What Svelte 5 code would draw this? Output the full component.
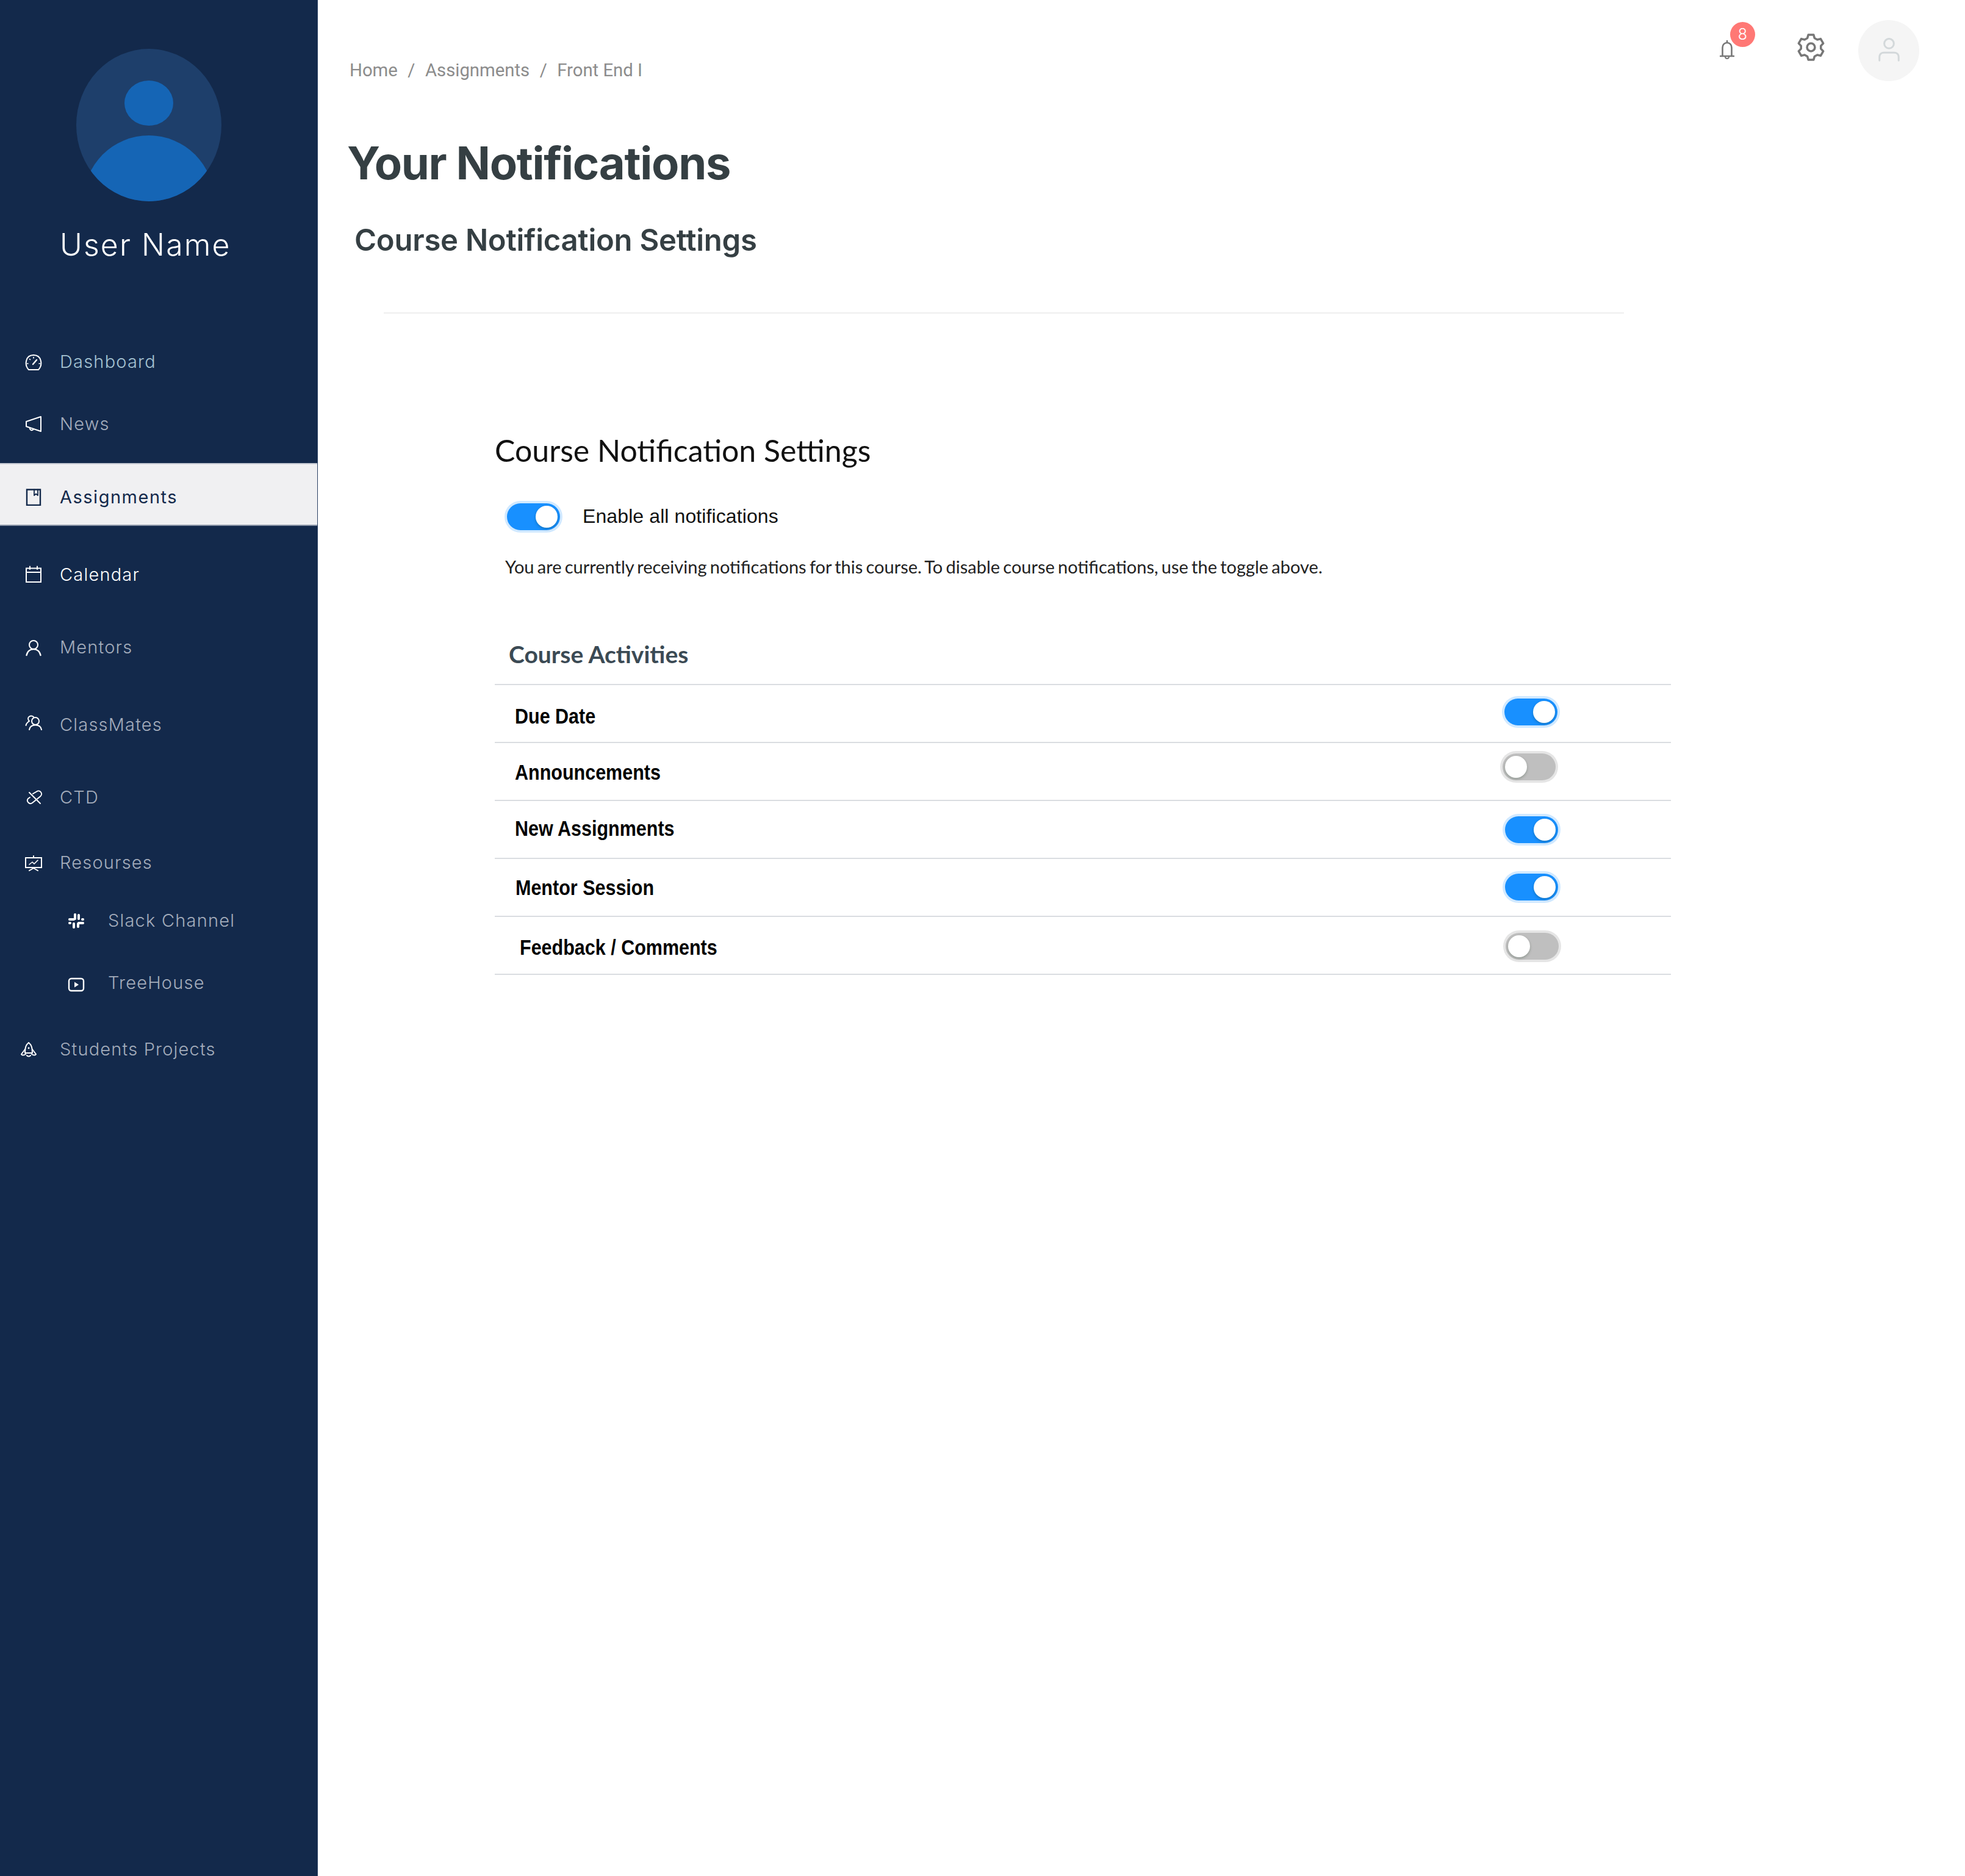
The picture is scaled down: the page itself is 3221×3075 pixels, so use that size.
<script>
const navItems = [
  { id: 'dashboard', label: 'Dashboard', gap: 0, tone: 'teal', iconY: 2 },
  { id: 'news', label: 'News', gap: 42, iconY: 1 },
  { id: 'assignments', label: 'Assignments', gap: 35, active: true, iconY: 0 },
  { id: 'calendar', label: 'Calendar', gap: 49, tone: 'bright', iconY: 0 },
  { id: 'mentors', label: 'Mentors', gap: 59, iconY: 2 },
  { id: 'classmates', label: 'ClassMates', gap: 67, iconY: -2 },
  { id: 'ctd', label: 'CTD', gap: 59, iconY: 2 },
  { id: 'resources', label: 'Resourses', gap: 47, iconY: 2 },
  { id: 'slack', label: 'Slack Channel', gap: 35, sub: true, iconY: 2 },
  { id: 'treehouse', label: 'TreeHouse', gap: 42, sub: true, iconY: 4 },
  { id: 'rocket', label: 'Students Projects', gap: 49, outdent: true, iconY: 2 }
];

// offsets differ slightly per row in the design
const activities = [
  { label: 'Due Date', on: true, x: 33, labelTop: 30, toggleX: 1655, toggleTop: 22 },
  { label: 'Announcements', on: false, x: 33, labelTop: 27, toggleX: 1652, toggleTop: 17 },
  { label: 'New Assignments', on: true, x: 33, labelTop: 24, toggleX: 1656, toggleTop: 25 },
  { label: 'Mentor Session', on: true, x: 34, labelTop: 26, toggleX: 1656, toggleTop: 24 },
  { label: 'Feedback / Comments', on: false, x: 41, labelTop: 29, toggleX: 1657, toggleTop: 26 }
];
</script>

<div class="layout">
  <aside class="sidebar">
    <svg class="avatar" viewBox="0 0 238 250">
      <defs>
        <clipPath id="avatar-clip"><ellipse cx="119" cy="125" rx="119" ry="125" /></clipPath>
      </defs>
      <ellipse cx="119" cy="125" rx="119" ry="125" fill="#1e3f6b" />
      <ellipse cx="119" cy="89" rx="40" ry="37" fill="#1565b5" />
      <g clip-path="url(#avatar-clip)">
        <ellipse cx="119" cy="249" rx="107" ry="107" fill="#1565b5" />
      </g>
    </svg>
    <div class="username">User Name</div>

    <nav class="nav">
      {#each navItems as item}
        <a
          class="nav-item"
          class:active={item.active}
          class:sub={item.sub}
          class:outdent={item.outdent}
          class:teal={item.tone === 'teal'}
          class:bright={item.tone === 'bright'}
          style="margin-top: {item.gap}px"
          href="#{item.id}"
        >
          <svg class="nav-icon" style="margin-top: {item.iconY * 2}px" viewBox="0 0 28 28" fill="none" stroke="currentColor" stroke-width="2" stroke-linecap="round" stroke-linejoin="round">
            {#if item.id === 'dashboard'}
              <path d="M6 26 C-1 19 0 2 14 2 C28 2 29 19 22 26 Z" />
              <path d="M13 17 L19 10" stroke-width="2.4" />
              <path d="M3.500 16 h1.500 M23 16 h1.500 M7.500 8.500 l1 1 M14 5.500 v1.500" stroke-width="1.600" />
            {:else if item.id === 'news'}
              <path d="M26 2 V26 L2 18 V10 Z" />
              <path d="M8 20 a3 3 0 0 0 6 2" />
            {:else if item.id === 'assignments'}
              <path d="M3 1.500 H25 V27 H3 Z" stroke-linecap="butt" stroke-linejoin="miter" stroke-width="2.400" />
              <path d="M15 1.500 V11 L18 8.500 L21 11 V1.500" stroke-width="1.800" />
            {:else if item.id === 'calendar'}
              <path d="M2 4.500 H26 V27 H2 Z M2 11 H26" stroke-linejoin="miter" />
              <path d="M8 1.500 V6 M20 1.500 V6" />
            {:else if item.id === 'mentors'}
              <circle cx="14" cy="9" r="7" />
              <path d="M2.500 26 C4 19 9 16 14 16 C19 16 24 19 25.500 26" stroke-width="2.400" />
            {:else if item.id === 'classmates'}
              <circle cx="17" cy="11" r="6" />
              <path d="M7 25 C8 19 12 17.500 17 17.500 C22 17.500 26 19 27 25" />
              <path d="M14 4 A6 6 0 0 0 7 3.500 C4 5.500 5 9 7 11 C4 13 2 15 1.500 18" />
            {:else if item.id === 'ctd'}
              <path d="M13 7 L19 3.500 a5 5 0 0 1 6 8 L12 22 a5 5 0 0 1 -7 -7 L8 13" />
              <path d="M7 5 L25 23" />
            {:else if item.id === 'resources'}
              <path d="M1 5 H27 V21 H1 Z" stroke-linejoin="miter" />
              <path d="M14 2 V5 M14 22 L7 26 M14 22 L21 26" />
              <path d="M7 16 L12 12 L15 15 L21 9" stroke-width="1.600" />
            {:else if item.id === 'slack'}
              <g fill="currentColor" stroke="none">
                <rect x="1" y="9" width="11" height="4" rx="2" />
                <rect x="10" y="1" width="4" height="11" rx="2" />
                <rect x="16" y="2" width="4" height="10" rx="2" />
                <rect x="22" y="9" width="5" height="4" rx="2" />
                <rect x="16" y="15" width="11" height="4" rx="2" />
                <rect x="15" y="16" width="4" height="9" rx="2" />
                <rect x="8" y="16" width="4" height="10" rx="2" />
                <rect x="1" y="15" width="5" height="4" rx="2" />
              </g>
            {:else if item.id === 'treehouse'}
              <rect x="2" y="4" width="24" height="20" rx="4" stroke-width="2.400" />
              <path d="M11 9.500 L18 14 L11 18.500 Z" fill="currentColor" stroke="none" />
            {:else if item.id === 'rocket'}
              <path d="M14 2 C9 6 8 11 8 19 H20 C20 11 19 6 14 2 Z" />
              <path d="M8 13 L2 21 C3 23 6 23 9 21 M20 13 L26 21 C25 23 22 23 19 21" />
              <path d="M11 23 C12 25 16 25 17 23" />
              <circle cx="14" cy="11" r="1.400" fill="currentColor" stroke="none" />
            {/if}
          </svg>
          <span>{item.label}</span>
        </a>
      {/each}
    </nav>
  </aside>

  <main class="main">
    <header class="topbar">
      <div class="breadcrumb">
        <span>Home</span><i>/</i><span>Assignments</span><i>/</i><span>Front End I</span>
      </div>
      <div class="actions">
        <div class="bell">
          <svg viewBox="0 0 24 32" fill="none" stroke="#777" stroke-width="2.600" stroke-linecap="round">
            <path d="M4.500 26 V13 C4.500 8 8 5 12 5 C16 5 19.500 8 19.500 13 V26" />
            <path d="M1 27 H23 M12 2 V4.500" />
            <path d="M9 28 a3 3 0 0 0 6 0" stroke-width="2" />
          </svg>
          <span class="badge">8</span>
        </div>
        <svg class="gear" viewBox="0 0 24 24" fill="none" stroke="#777" stroke-width="1.800" stroke-linejoin="round">
          <circle cx="12" cy="12" r="3.300" />
          <path d="M9.800 1.500 H14.200 L15 4.300 L17.300 5.600 L20.100 4.900 L22.300 8.700 L20.300 10.800 V13.200 L22.300 15.300 L20.100 19.100 L17.300 18.400 L15 19.700 L14.200 22.500 H9.800 L9 19.700 L6.700 18.400 L3.900 19.100 L1.700 15.300 L3.700 13.200 V10.800 L1.700 8.700 L3.900 4.900 L6.700 5.600 L9 4.300 Z" />
        </svg>
        <div class="user-chip">
          <svg viewBox="0 0 40 44" fill="none" stroke="#d3d8da" stroke-width="3.200" stroke-linecap="round">
            <circle cx="20" cy="10" r="8.500" />
            <path d="M3 40 V34 C3 28 7 26 11 26 H29 C33 26 37 28 37 34 V40" />
          </svg>
        </div>
      </div>
    </header>

    <h1 class="title">Your Notifications</h1>
    <h2 class="subtitle">Course Notification Settings</h2>
    <hr class="divider" />

    <section class="settings">
      <h3 class="settings-title">Course Notification Settings</h3>
      <div class="enable-row">
        <span class="switch on"></span>
        <span class="enable-label">Enable all notifications</span>
      </div>
      <p class="hint">You are currently receiving notifications for this course. To disable course notifications, use the toggle above.</p>

      <h4 class="activities-title">Course Activities</h4>
      <div class="activities">
        {#each activities as row}
          <div class="activity">
            <span class="activity-label" style="left: {row.x}px; top: {row.labelTop}px">{row.label}</span>
            <span class="switch" class:on={row.on} style="left: {row.toggleX}px; top: {row.toggleTop}px"></span>
          </div>
        {/each}
      </div>
    </section>
  </main>
</div>

<style>
:global(body) {
  margin: 0;
  background: #fff;
}

.layout {
  display: flex;
  min-height: 3075px;
  font-family: Inter, sans-serif;
}

.sidebar {
  width: 520px;
  flex-shrink: 0;
  background: #13294b;
  border-right: 1px solid #2a4063;
  padding-top: 80px;
  box-sizing: content-box;
}

.avatar {
  display: block;
  width: 238px;
  height: 250px;
  margin-left: 125px;
}

.username {
  margin: 40px 0 0 98px;
  height: 62px;
  line-height: 62px;
  font-size: 50px;
  font-weight: 300;
  letter-spacing: 2.1px;
  color: #fff;
}

.nav {
  display: flex;
  flex-direction: column;
  margin-top: 130px;
}

.nav-item {
  display: flex;
  align-items: center;
  gap: 29px;
  height: 60px;
  padding-left: 41px;
  color: #a3acbb;
  font-size: 29px;
  font-weight: 300;
  letter-spacing: 1.2px;
  text-decoration: none;
}

.nav-icon {
  width: 28px;
  height: 28px;
  flex-shrink: 0;
  color: #fff;
}

.nav-item.teal {
  color: #a4c2d2;
}

.nav-item.bright {
  color: #fff;
}

.nav-item.sub {
  padding-left: 111px;
  gap: 38px;
}

.nav-item.outdent {
  padding-left: 33px;
  gap: 37px;
}

.nav-item.active {
  height: 103px;
  padding-top: 8px;
  box-sizing: border-box;
  background: #f0f0f2;
  border-top: 2px solid #c5cad3;
  border-bottom: 2px solid #8d97a8;
  color: #13294b;
  font-weight: 400;
  letter-spacing: 1.5px;
}

.nav-item.active .nav-icon {
  color: #13294b;
}

.main {
  flex: 1;
  min-width: 0;
}

.topbar {
  display: flex;
  justify-content: space-between;
  align-items: flex-start;
  height: 133px;
}

.breadcrumb {
  display: flex;
  margin: 95px 0 0 52px;
  height: 40px;
  line-height: 40px;
  font-family: Roboto, sans-serif;
  font-size: 29.3px;
  color: #8c8c8c;
}

.breadcrumb i {
  font-style: normal;
  margin: 0 16.5px;
}

.actions {
  display: flex;
  align-items: flex-start;
  margin: 33px 75px 0 0;
}

.bell {
  position: relative;
  width: 24px;
  height: 32px;
  margin-top: 32px;
}

.bell svg {
  display: block;
  width: 24px;
  height: 32px;
}

.badge {
  position: absolute;
  left: 17px;
  top: -29px;
  width: 41px;
  height: 41px;
  border-radius: 50%;
  background: #ff7875;
  color: #fff;
  font-size: 25px;
  font-weight: 300;
  line-height: 41px;
  text-align: center;
}

.gear {
  width: 47px;
  height: 47px;
  margin: 21px 0 0 102px;
}

.user-chip {
  display: flex;
  align-items: center;
  justify-content: center;
  width: 100px;
  height: 100px;
  margin-left: 54px;
  border-radius: 50%;
  background: #f5f5f5;
}

.user-chip svg {
  width: 37px;
  height: 41px;
  margin-top: -2px;
}

.title {
  margin: 94px 0 0 48px;
  height: 80px;
  line-height: 80px;
  font-size: 74px;
  font-weight: 700;
  letter-spacing: -1.3px;
  color: #353f43;
}

.subtitle {
  margin: 57px 0 0 60px;
  height: 60px;
  line-height: 60px;
  font-size: 49px;
  font-weight: 600;
  letter-spacing: -0.25px;
  color: #353f43;
}

.divider {
  width: 2033px;
  height: 2px;
  margin: 88px 0 0 108px;
  border: 0;
  background: #eeeeee;
}

.settings {
  width: 1928px;
  margin: 194px 0 0 290px;
}

.settings-title {
  margin: 0;
  height: 60px;
  line-height: 60px;
  font-family: Lato, sans-serif;
  font-size: 50px;
  font-weight: 400;
  color: #111;
}

.enable-row {
  display: flex;
  align-items: center;
  height: 44px;
  margin: 57px 0 0 20px;
}

.enable-label {
  margin: -2px 0 0 37px;
  font-family: "Liberation Sans", sans-serif;
  font-size: 32px;
  letter-spacing: 0.1px;
  color: #111;
}

.hint {
  height: 40px;
  margin: 40px 0 0 17px;
  line-height: 40px;
  font-family: Lato, sans-serif;
  font-size: 29px;
  word-spacing: -2.2px;
  color: #222;
}

.activities-title {
  height: 50px;
  margin: 98px 0 0 23px;
  line-height: 50px;
  font-family: Lato, sans-serif;
  font-size: 39px;
  font-weight: 700;
  color: #3b4a54;
}

.activities {
  margin-top: 24px;
  border-top: 2px solid #dadde1;
}

.activity {
  position: relative;
  height: 93px;
  border-bottom: 2px solid #dadde1;
}

.activity-label {
  position: absolute;
  line-height: 40px;
  font-family: "Liberation Sans", sans-serif;
  font-size: 30.5px;
  font-weight: 700;
  color: #000;
  transform: scaleY(1.18);
}

.activity .switch {
  position: absolute;
}

.switch {
  display: block;
  position: relative;
  width: 87px;
  height: 44px;
  flex-shrink: 0;
  border-radius: 22px;
  background: #bfbfbf;
  box-shadow: 0 0 0 4px rgba(0, 0, 0, 0.1);
}

.switch::after {
  content: '';
  position: absolute;
  top: 4px;
  left: 4px;
  width: 36px;
  height: 36px;
  border-radius: 50%;
  background: #fff;
  box-shadow: 0 2px 4px rgba(0, 35, 11, 0.25);
}

.switch.on {
  background: #1890ff;
  box-shadow: 0 0 0 4px rgba(24, 144, 255, 0.2);
}

.switch.on::after {
  left: 47px;
}
</style>
